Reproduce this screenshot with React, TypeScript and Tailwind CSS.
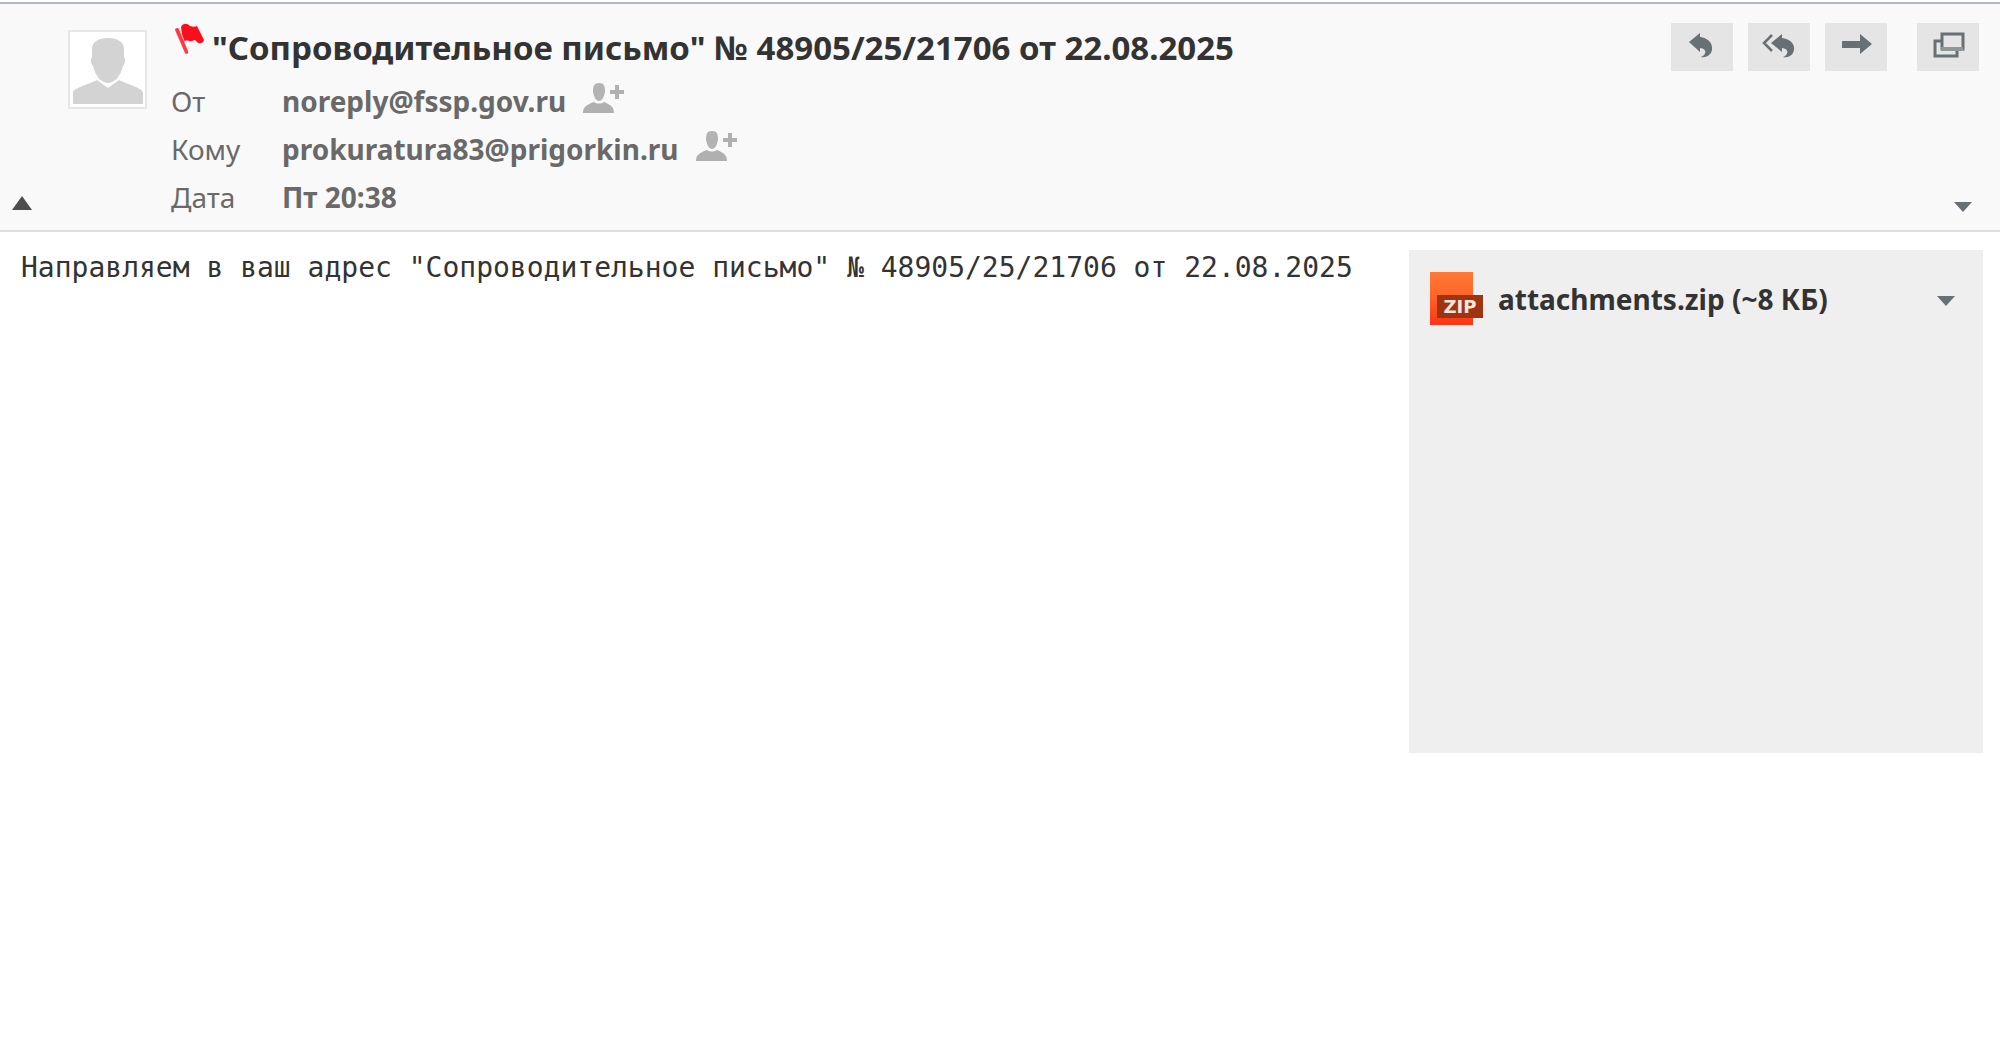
import type { ReactNode } from "react";

function FlagIcon() {
  return (
    <svg viewBox="0 0 30 32" className="h-8 w-[30px]" aria-hidden="true">
      <path d="M1 7c0-2 3-3 4-1l9 22c1 3-2 4-3 2z" fill="#fd3a46" />
      <path
        d="M7 4c2-4 6-4 9-1 3 1 5 1 7 0l3 6 4 8c-1 4-5 4-7 2l-2-2c-2 0-3 2-6 1-2-1-4 0-6 1z"
        fill="#fb0d1b"
      />
      <path d="M5 5l6 15" stroke="#fdb9be" strokeWidth="1" />
    </svg>
  );
}

function Avatar() {
  return (
    <div className="h-[79px] w-[79px] border-2 border-[#e6e6e6] bg-white">
      <svg viewBox="0 0 75 75" className="h-full w-full" aria-hidden="true">
        <path
          d="M38 6c10 0 16 4 16 11v8c2 1 1 8-1 9-2 9-8 17-15 17s-13-8-15-17c-2-1-3-8-1-9v-8C22 10 28 6 38 6z"
          fill="#d3d3d3"
        />
        <path d="M3 72V61c0-5 14-8 24-13l11 8 11-8c10 5 24 8 24 13v11z" fill="#d3d3d3" />
      </svg>
    </div>
  );
}

function AddContact({ email }: { email: string }) {
  return (
    <button type="button" aria-label={`Добавить ${email}`} className="-mt-1.5 ml-4">
      <svg viewBox="0 0 44 32" className="h-8 w-11" aria-hidden="true">
        <path d="M17 1c5 0 6 3 6 9-1 5-3 9-6 9s-5-4-6-9c0-6 1-9 6-9z" fill="#b3b3b3" />
        <path d="M1 31c0-6 3-8 11-11 3 2 7 2 10 0 7 3 10 5 10 11z" fill="#b0b0b0" />
        <path d="M33 3h4v5h5v4h-5v5h-4v-5h-5V8h5z" fill="#b0b0b0" />
      </svg>
    </button>
  );
}

function ToolButton({ label, children }: { label: string; children: ReactNode }) {
  return (
    <button
      type="button"
      aria-label={label}
      className="flex h-12 w-[62px] items-start justify-center bg-[#e5e5e5] pt-2 text-[#677074]"
    >
      {children}
    </button>
  );
}

function ReplyIcon() {
  return (
    <svg viewBox="0 0 32 28" className="h-7 w-8" aria-hidden="true">
      <path d="M3 11L14 2v4c8 1 13 6 12 13-1 5-6 8-11 7 5-2 7-8-1-9v4z" fill="currentColor" />
    </svg>
  );
}

function ReplyAllIcon() {
  return (
    <svg viewBox="0 0 34 28" className="h-7 w-[34px]" aria-hidden="true">
      <path d="M10 4l-8 8 8 8" fill="none" stroke="currentColor" strokeWidth="2.5" />
      <path d="M9 12l11-9v4c8 1 13 6 12 12-1 5-5 8-11 7 5-2 7-8-1-9v4z" fill="currentColor" />
    </svg>
  );
}

function ForwardIcon() {
  return (
    <svg viewBox="0 0 32 28" className="h-7 w-8" aria-hidden="true">
      <path d="M2 10h18V3l12 10-12 10v-6H2z" fill="currentColor" />
    </svg>
  );
}

function WindowIcon() {
  return (
    <svg viewBox="0 0 34 28" className="h-7 w-[34px]" aria-hidden="true">
      <rect x="4" y="10" width="22" height="15" fill="none" stroke="currentColor" strokeWidth="3" />
      <rect x="11" y="3" width="21" height="15" fill="#e5e5e5" stroke="currentColor" strokeWidth="3" />
      <path d="M10 18h22" stroke="#909799" strokeWidth="4" />
    </svg>
  );
}

function DownTriangle() {
  return (
    <svg viewBox="0 0 18 10" className="h-2.5 w-[18px]" aria-hidden="true">
      <path d="M0 0h18L9 10z" fill="#677074" />
    </svg>
  );
}

function ZipIcon() {
  return (
    <svg viewBox="0 0 54 54" className="h-[54px] w-[54px]" aria-hidden="true">
      <defs>
        <linearGradient id="zipSheet" x1="0" y1="0" x2="0" y2="1">
          <stop offset="0" stopColor="#ff7a34" />
          <stop offset="0.45" stopColor="#fe6528" />
          <stop offset="1" stopColor="#fd3415" />
        </linearGradient>
      </defs>
      <rect x="1" y="0" width="43" height="53" fill="url(#zipSheet)" />
      <rect x="8" y="23" width="46" height="23" fill="#a03410" />
      <text
        x="31"
        y="41"
        textAnchor="middle"
        fill="#f7e4dc"
        className="font-['DejaVu_Sans'] text-[18px] font-bold"
      >
        ZIP
      </text>
    </svg>
  );
}

export default function App() {
  return (
    <div className="min-h-screen bg-white pt-0.5 font-['Noto_Sans',sans-serif]">
      <header className="relative flex items-start border-t-2 border-b-2 border-t-[#b2b9c5] border-b-[#dedede] bg-[#f9f9f9] pt-[19px] pr-[21px] pb-[9px] pl-[68px]">
        <div className="pt-[7px]">
          <Avatar />
        </div>
        <div className="ml-6 flex-1">
          <h1 className="flex items-start gap-2 pl-[3px] text-[33px] leading-[50px] font-bold text-[#333]">
            <FlagIcon />
            <span>"Сопроводительное письмо" № 48905/25/21706 от 22.08.2025</span>
          </h1>
          <dl className="grid grid-cols-[111px_1fr] pt-1 text-[28px] leading-[48px] text-[#696969]">
            <dt>От</dt>
            <dd className="flex items-center font-bold">
              noreply@fssp.gov.ru
              <AddContact email="noreply@fssp.gov.ru" />
            </dd>
            <dt>Кому</dt>
            <dd className="flex items-center font-bold">
              prokuratura83@prigorkin.ru
              <AddContact email="prokuratura83@prigorkin.ru" />
            </dd>
            <dt>Дата</dt>
            <dd className="font-bold">Пт 20:38</dd>
          </dl>
        </div>
        <div className="flex gap-[15px]">
          <ToolButton label="Ответить">
            <ReplyIcon />
          </ToolButton>
          <ToolButton label="Ответить всем">
            <ReplyAllIcon />
          </ToolButton>
          <ToolButton label="Переслать">
            <ForwardIcon />
          </ToolButton>
          <div className="ml-[15px]">
            <ToolButton label="Открыть в новом окне">
              <WindowIcon />
            </ToolButton>
          </div>
        </div>
        <button type="button" aria-label="Свернуть" className="absolute bottom-5 left-3">
          <svg viewBox="0 0 20 14" className="h-3.5 w-5" aria-hidden="true">
            <path d="M10 0l10 14H0z" fill="#4d4d4d" />
          </svg>
        </button>
        <button type="button" aria-label="Ещё" className="absolute right-7 bottom-[18px]">
          <DownTriangle />
        </button>
      </header>

      <main className="flex items-start justify-between pt-[18px] pr-[17px] pl-[21px]">
        <p className="font-['DejaVu_Sans_Mono',monospace] text-[28px] leading-9 text-[#333]">
          Направляем в ваш адрес "Сопроводительное письмо" № 48905/25/21706 от 22.08.2025
        </p>
        <aside className="min-h-[503px] w-[574px] shrink-0 bg-[#efefef] pt-[22px] pr-7 pl-5">
          <div className="flex items-center">
            <ZipIcon />
            <a href="#attachments" className="ml-[15px] text-[28px] leading-[54px] font-bold text-[#333]">
              attachments.zip (~8 КБ)
            </a>
            <button type="button" aria-label="Действия с вложением" className="ml-auto pt-1">
              <DownTriangle />
            </button>
          </div>
        </aside>
      </main>
    </div>
  );
}
